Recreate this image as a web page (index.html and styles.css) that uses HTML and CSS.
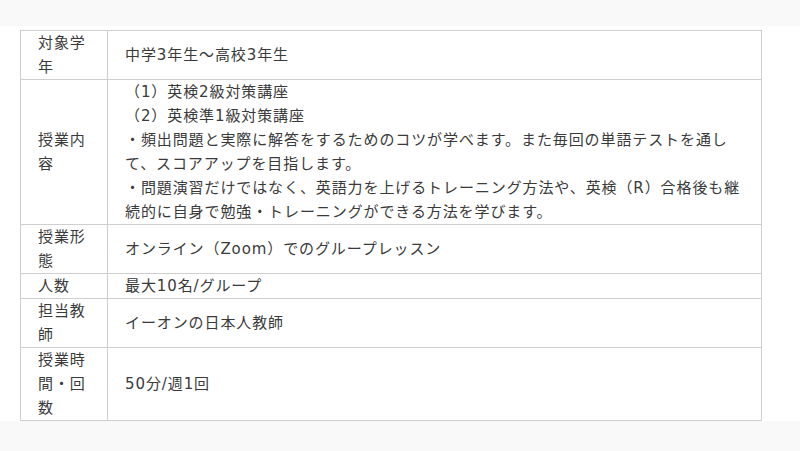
FILE: index.html
```html
<!DOCTYPE html>
<html lang="ja">
<head>
<meta charset="utf-8">
<link rel="stylesheet" href="styles.css">
</head>
<body>
<div class="top-band"></div>
<section class="panel">
  <table class="info">
    <tr>
      <th>対象学年</th>
      <td>中学3年生〜高校3年生</td>
    </tr>
    <tr>
      <th>授業内容</th>
      <td>（1）英検2級対策講座<br>（2）英検準1級対策講座<br>・頻出問題と実際に解答をするためのコツが学べます。また毎回の単語テストを通して、スコアアップを目指します。<br>・問題演習だけではなく、英語力を上げるトレーニング方法や、英検（R）合格後も継続的に自身で勉強・トレーニングができる方法を学びます。</td>
    </tr>
    <tr>
      <th>授業形態</th>
      <td>オンライン（Zoom）でのグループレッスン</td>
    </tr>
    <tr>
      <th>人数</th>
      <td>最大10名/グループ</td>
    </tr>
    <tr>
      <th>担当教師</th>
      <td>イーオンの日本人教師</td>
    </tr>
    <tr>
      <th>授業時間・回数</th>
      <td>50分/週1回</td>
    </tr>
  </table>
</section>
</body>
</html>
```

FILE: styles.css
```css
html, body {
  margin: 0;
  padding: 0;
  background: #f9f9f9;
}
body {
  font-family: "DejaVu Sans", "Noto Sans CJK JP", sans-serif;
  color: #3a3a3a;
  font-size: 15px;
  line-height: 24px;
  letter-spacing: 0.06em;
}
.top-band {
  height: 26px;
}
.panel {
  background: #fff;
  padding: 4px 38px 0 20px;
  height: 391px;
}
.info {
  width: 742px;
  border-collapse: collapse;
  border: 1px solid #cfcfcf;
}
.info th,
.info td {
  border: 1px solid #cfcfcf;
  padding: 0 16px 0 17px;
  vertical-align: middle;
  text-align: left;
  font-weight: normal;
}
.info th {
  width: 53px;
}
.info td {
  padding-left: 17px;
}
```
